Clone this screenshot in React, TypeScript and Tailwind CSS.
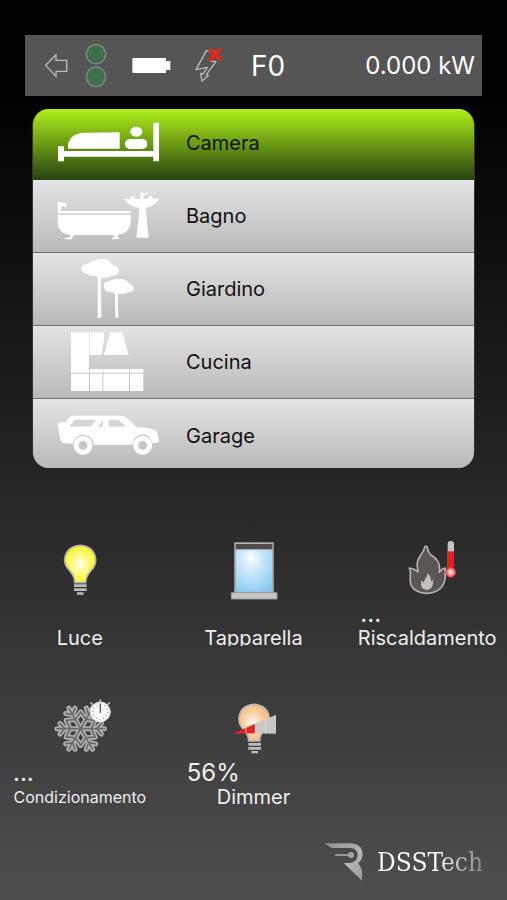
import type { ReactNode } from 'react';
import { useState } from 'react';
import { clsx } from 'clsx';

function BedIcon() {
  return (
    <svg viewBox="93 17 312 192" className="h-16 w-[104px] shrink-0" fill="#fff" aria-hidden="true">
      <path d="M99 123h18v14h268V52h17v116h-17v-14H117v14H99z" />
      <path d="M129 130v-10q4-36 52-38l103-1v49z" />
      <ellipse cx="334" cy="79" rx="18" ry="15" />
      <rect x="300" y="101" width="67" height="30" rx="15" />
    </svg>
  );
}

function BathIcon() {
  return (
    <svg viewBox="93 237 312 192" className="h-16 w-[104px] shrink-0" fill="#fff" aria-hidden="true">
      <path d="M98 292l10-1 2 3q14-4 15 12l-5 1q-2-5-10-5l-3 16h210v7H98z" />
      <path d="M98 329h219v22q-2 33-38 39l-1 5 5 7-22 1v-5l8-1-5-7H148l-6 9-4 4h-18v-4l14-2 2-7q-37-5-38-40z" />
      <path d="M298 281l20 2-2-8 10-2 6 9 14-1 1-18 6-1 2 5 14-5 1 3-15 8v9l12-1 8-9 8 2-2 8 21-2q-8 19-32 27l-8 2 9 89h-37l10-89q-37-6-46-29z" />
    </svg>
  );
}

function GardenIcon() {
  return (
    <svg viewBox="93 21 312 192" className="h-16 w-[104px] shrink-0" fill="#fff" aria-hidden="true">
      <path d="M168 57q2-14 22-16 5-8 18-8 8-7 25-6 22 1 28 18 20 3 20 17-1 14-19 15-9 7-28 6-13 3-22-6-14 4-24-5-18-3-20-15z" />
      <path d="M236 107q2-12 17-13 8-8 22-6 17-3 27 3 10 5 10 11 14 4 15 13-2 11-16 11-8 7-22 5-17 4-28-4-24-1-25-20z" />
      <path d="M218 78h10l1 125h-11zM270 128h8l2 75h-9z" />
    </svg>
  );
}

function KitchenIcon() {
  return (
    <svg viewBox="93 240 312 192" className="h-16 w-[104px] shrink-0" fill="#fff" aria-hidden="true">
      <path d="M138 247h54v121h-54zM194 247h43v26l-7 42h-36zM257 247h35l19 68h-75z" />
      <path d="M194 357h39v11h-39zM235 357h78v11h-78zM315 357h40v11h-40z" />
      <path d="M138 371h54v52h-54zM195 371h37v52h-37zM235 371h77v52h-77zM315 371h40v52h-40z" />
    </svg>
  );
}

function CarIcon() {
  return (
    <svg viewBox="93 461 312 192" className="h-16 w-[104px] shrink-0" aria-hidden="true">
      <path
        fill="#fff"
        fillRule="evenodd"
        d="M98 521q1-4 8-5h14l15-16q3-4 12-4h140q9 0 17 6l32 29q38 1 54 8 8 4 9 20 4 4 3 10-1 8-10 9l-10 1q-5-27-30-27-25 1-30 31H207q-5-30-32-30-26 0-32 27l-28-2q-8-2-10-14zM149 508l-14 18q-2 3 3 3l56-1q6-1 8-5l12-15zM234 511l-16 19 16-1zM251 508v21l52-1-20-17q-4-3-10-3z"
      />
      <circle cx="174" cy="585" r="21" fill="none" stroke="#fff" strokeWidth="15" />
      <circle cx="353" cy="585" r="21" fill="none" stroke="#fff" strokeWidth="15" />
    </svg>
  );
}

function BulbIcon() {
  return (
    <svg viewBox="26 24 192 192" className="size-16" aria-hidden="true">
      <defs>
        <radialGradient id="bulb" cx="0.5" cy="0.5" r="0.6">
          <stop offset="0" stopColor="#fffef0" />
          <stop offset="0.45" stopColor="#fffb7a" />
          <stop offset="0.85" stopColor="#fdf425" />
        </radialGradient>
      </defs>
      <path
        d="M106 158q0-20-15-36-15-16-15-32 3-40 47-44 43 4 46 44 0 18-15 33-14 15-15 35z"
        fill="url(#bulb)"
        stroke="#b3b3b3"
        strokeWidth="5"
      />
      <path d="M104 163h38v8h-38zM104 175h38v8h-38zM113 187h20v7h-20z" fill="#b9bcbc" />
    </svg>
  );
}

function ShutterIcon() {
  return (
    <svg viewBox="64 24 192 192" className="size-16" aria-hidden="true">
      <defs>
        <radialGradient id="glass" cx="0.42" cy="0.3" r="0.8">
          <stop offset="0" stopColor="#fafdff" />
          <stop offset="0.4" stopColor="#c5e6fb" />
          <stop offset="1" stopColor="#86c8f3" />
        </radialGradient>
      </defs>
      <path d="M106 39h114v149H106z" fill="url(#glass)" stroke="#aaa5a0" strokeWidth="5" />
      <path d="M108 42h110v16H108z" fill="#514c4a" />
      <path d="M108 59h110" stroke="#aaa" strokeWidth="3" />
      <path d="M95 188h137v19H95z" fill="#c4c4c4" stroke="#9c9a98" strokeWidth="3" />
    </svg>
  );
}

function HeatingIcon() {
  return (
    <svg viewBox="136 24 192 192" className="size-16" aria-hidden="true">
      <defs>
        <radialGradient id="mercury">
          <stop offset="0" stopColor="#fff" />
          <stop offset="0.5" stopColor="#fb9a98" />
          <stop offset="1" stopColor="#e7262a" />
        </radialGradient>
      </defs>
      <path
        d="M226 49q-3 14-14 28-12 17-9 33l2 16q-8-9-26-12 5 12 3 26-6 45 48 50 54-2 57-52-2-10 0-24-11 2-18 13 3-24-7-36-8-10-17-15-11-9-12-25-2-3-7-2z"
        fill="#595654"
        stroke="#b5b3b1"
        strokeWidth="5"
        strokeLinejoin="round"
      />
      <path d="M234 130q-1 10-8 17l-4 10q-3-4-9-5 3 6 1 12 2 14 18 16 17-3 18-20 0-6 2-9-6 0-8 4 1-16-10-25z" fill="#c2c0be" />
      <rect x="294" y="33" width="19" height="96" rx="9" fill="#c3c3c3" />
      <path d="M294 64h19v55h-19z" fill="#e02020" />
      <circle cx="303" cy="127" r="16" fill="url(#mercury)" />
    </svg>
  );
}

const flakeAngles = [30, 90, 150, 210, 270, 330];
const flakeArm = 'M227 116V45M227 68l-16-14M227 68l16-14M227 84l-25-11M227 84l25-11';

function CoolingIcon() {
  return (
    <svg viewBox="129 21 192 192" className="size-16" fill="none" strokeLinecap="round" aria-hidden="true">
      {[
        { color: '#b5b3b1', width: 15 },
        { color: '#6d6a67', width: 5 },
      ].map(({ color, width }) => (
        <g key={color} stroke={color} strokeWidth={width}>
          {flakeAngles.map((a) => (
            <path key={a} d={flakeArm} transform={`rotate(${a} 227 116)`} />
          ))}
        </g>
      ))}
      <path d="M286 36V31M308 44l5-5M263 44l-5-5" stroke="#aaa" strokeWidth="6" />
      <circle cx="286" cy="66" r="30" fill="#f8f8f8" stroke="#dedede" strokeWidth="3" />
      <circle cx="286" cy="66" r="22" stroke="#777" strokeWidth="4" strokeDasharray="2 9.5" strokeLinecap="butt" />
      <path d="M286 67V42" stroke="#555" strokeWidth="4" />
    </svg>
  );
}

function DimmerIcon() {
  return (
    <svg viewBox="123 21 192 192" className="size-16" aria-hidden="true">
      <defs>
        <radialGradient id="dimmed" cx="0.45" cy="0.5" r="0.6">
          <stop offset="0" stopColor="#fff3e4" />
          <stop offset="0.8" stopColor="#f9bd83" />
        </radialGradient>
      </defs>
      <path
        d="M206 153q0-19-14-33-15-15-15-34 3-39 45-43 43 4 46 43 0 20-15 34-14 14-14 33z"
        fill="url(#dimmed)"
        stroke="#b9b9b9"
        strokeWidth="5"
      />
      <path d="M158 131l68-30v29z" fill="#dc2626" />
      <path d="M226 101l62-27v57l-62-1z" fill="#c9c7c5" />
      <path d="M198 112v19M226 101v30M257 87v44" stroke="#e9e2dc" strokeWidth="2" />
      <path d="M205 159h38v8h-38zM205 171h38v8h-38zM214 183h20v7h-20z" fill="#b9bcbc" />
    </svg>
  );
}

function Logo() {
  return (
    <svg viewBox="24 18 120 120" className="size-10" aria-hidden="true">
      <defs>
        <linearGradient id="brand" x1="0" y1="0" x2="1" y2="1">
          <stop offset="0" stopColor="#8d8d8d" />
          <stop offset="0.6" stopColor="#b5b5b5" />
          <stop offset="1" stopColor="#999" />
        </linearGradient>
      </defs>
      <path
        d="M25 22h82q33 4 33 34-1 16-13 24l11 22v32L83 81h20q22-4 22-25-2-19-22-20H48q-12-6-23-14z"
        fill="url(#brand)"
      />
      <path d="M58 57h42" stroke="#a5a5a5" strokeWidth="5" />
      <circle cx="105" cy="57" r="9" fill="#a5a5a5" />
    </svg>
  );
}

const rooms: { name: string; icon: ReactNode }[] = [
  { name: 'Camera', icon: <BedIcon /> },
  { name: 'Bagno', icon: <BathIcon /> },
  { name: 'Giardino', icon: <GardenIcon /> },
  { name: 'Cucina', icon: <KitchenIcon /> },
  { name: 'Garage', icon: <CarIcon /> },
];

const devices: { name: string; status?: string; small?: boolean; icon: ReactNode }[] = [
  { name: 'Luce', icon: <BulbIcon /> },
  { name: 'Tapparella', icon: <ShutterIcon /> },
  { name: 'Riscaldamento', status: '...', icon: <HeatingIcon /> },
  { name: 'Condizionamento', status: '...', small: true, icon: <CoolingIcon /> },
  { name: 'Dimmer', status: '56%', icon: <DimmerIcon /> },
];

function StatusBar() {
  return (
    <header className="mx-[25px] flex h-[61px] items-center bg-[#555] pl-5 pr-[7px] text-white">
      <button type="button" aria-label="Indietro" className="shrink-0">
        <svg viewBox="75 72 69 72" className="h-6 w-[23px]" fill="none" stroke="#bbb" strokeWidth="4">
          <path d="M77 106l31-32v17h32v33h-32v15z" />
        </svg>
      </button>
      <svg viewBox="196 40 66 134" className="ml-[17px] h-[45px] w-[22px] shrink-0" fill="#3f6f4c" stroke="#7c857c" strokeWidth="5" aria-hidden="true">
        <circle cx="229" cy="73" r="29" />
        <circle cx="229" cy="141" r="29" />
      </svg>
      <svg viewBox="336 81 117 51" className="ml-[25px] h-[17px] w-[39px] shrink-0" fill="#fff" aria-hidden="true">
        <path d="M340 84h98v9h13v27h-13v9H340q-3 0-3-3V87q0-3 3-3z" />
      </svg>
      <svg viewBox="526 53 84 108" className="ml-6 h-9 w-7 shrink-0" fill="none" aria-hidden="true">
        <path d="M560 61l26 3-13 29h16l-29 40 6 3-19 16-4-23 7 2 13-20-34 7z" stroke="#bbb" strokeWidth="4" strokeLinejoin="round" />
        <path d="M569 57l35 32M603 55l-34 35" stroke="#e0281f" strokeWidth="12" />
      </svg>
      <span className="ml-7 text-[28px] leading-8">F0</span>
      <span className="ml-auto text-2xl">0.000 kW</span>
    </header>
  );
}

export default function App() {
  const [active, setActive] = useState('Camera');

  return (
    <main className="flex min-h-screen flex-col bg-linear-to-b/srgb from-black from-10% to-[#4e4e4e] pt-[35px] font-['Inter',sans-serif]">
      <StatusBar />

      <nav className="mx-8 mt-[13px] overflow-hidden rounded-2xl border-x border-[#333]">
        {rooms.map(({ name, icon }) => (
          <button
            key={name}
            type="button"
            aria-pressed={name === active}
            onClick={() => setActive(name)}
            className={clsx(
              'flex h-[73px] w-full items-center gap-[26px] pl-[23px] text-left text-xl text-[#111] first:h-[71px] first:pb-1 last:h-[69px] last:pt-1',
              name === active
                ? 'bg-linear-to-b/srgb from-[#aef01a] to-[#26420f]'
                : 'border-b border-[#707070] bg-linear-to-b/srgb from-[#e4e4e4] to-[#b9b9b9] last:border-b-0',
            )}
          >
            {icon}
            {name}
          </button>
        ))}
      </nav>

      <section className="mt-[70px] grid grid-cols-3 gap-x-10 gap-y-[47px] px-[13px] text-[#eee]">
        {devices.map(({ name, status, small, icon }) => (
          <button key={name} type="button" className="flex h-28 flex-col items-center">
            {icon}
            <span className="h-6 w-full text-left text-2xl leading-6">{status}</span>
            <span className={clsx('whitespace-nowrap leading-6', small ? 'text-base' : 'text-xl', name === 'Tapparella' && 'h-5 overflow-hidden')}>
              {name}
            </span>
          </button>
        ))}
      </section>

      <footer className="mt-auto flex items-center justify-end gap-[13px] pb-[18px] pr-6">
        <Logo />
        <span className="bg-linear-to-r from-white from-55% to-[#858585] bg-clip-text font-['DejaVu_Serif_Condensed','DejaVu_Serif',serif] text-[26px] leading-9 text-transparent">
          DSSTech
        </span>
      </footer>
    </main>
  );
}
